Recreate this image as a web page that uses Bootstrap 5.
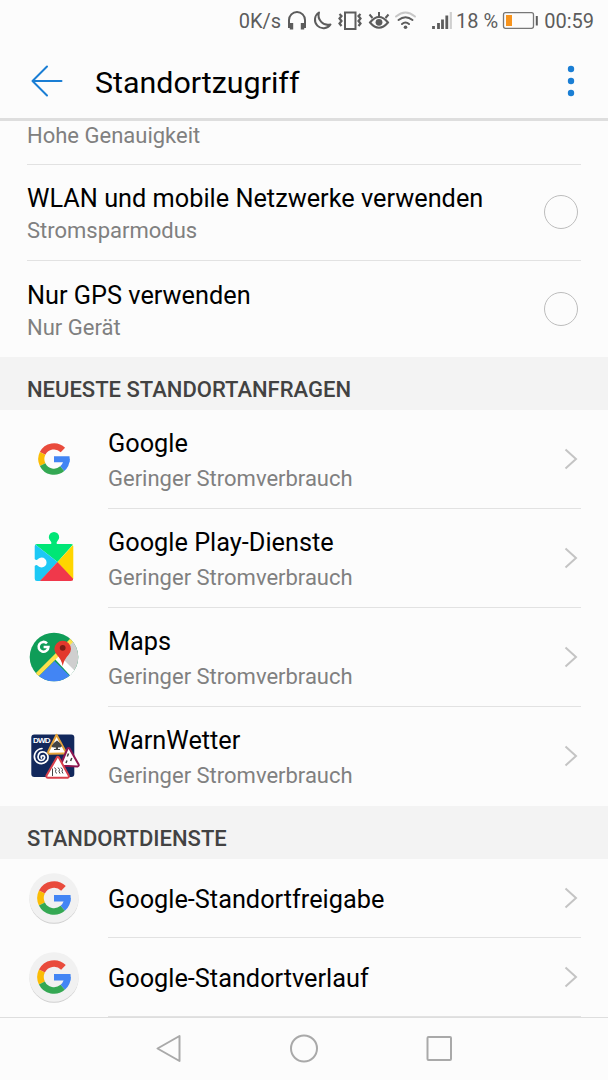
<!DOCTYPE html>
<html lang="de">
<head>
  <meta charset="UTF-8">
  <meta name="viewport" content="width=device-width, initial-scale=1.0">
  <title>Standortzugriff</title>

  <!-- Bootstrap CSS -->
  <link href="https://cdn.jsdelivr.net/npm/bootstrap@5.3.0/dist/css/bootstrap.min.css" rel="stylesheet">

  <style>
    body {
      background-color: #fcfcfc;
      color: #000;
      font-family: Roboto, "Liberation Sans", sans-serif;
      height: 1080px;
      overflow: hidden;
    }
    svg {
      display: block;
      flex-shrink: 0;
    }
    .status-bar {
      height: 42px;
      padding-right: 14px;
      font-size: 20px;
      color: #5c5c5c;
    }
    .app-bar {
      height: 79px;
      border-bottom: 3px solid #dedede;
      padding: 2px 31px 0 31px;
    }
    .app-title {
      font-size: 30.4px;
      line-height: 36px;
      margin-left: 31px;
      padding-top: 3px;
    }
    .mode-row {
      height: 96px;
      margin: 0 27px;
      padding-right: 3px;
      border-bottom: 1px solid #e2e2e2;
    }
    .mode-row.first-row {
      height: 44px;
    }
    .mode-row.first-row .row-note {
      line-height: 30px;
    }
    .mode-row.last-row {
      border-bottom: 0;
    }
    .mode-text {
      padding-top: 5px;
    }
    .row-title {
      font-size: 25.3px;
      line-height: 32px;
    }
    .row-note {
      font-size: 22px;
      line-height: 32px;
      color: #808080;
    }
    .form-check-input.mode-radio {
      width: 34px;
      height: 34px;
      margin: 0 0 1px;
      background-color: transparent;
      border: 1.5px solid #bdbdbd;
    }
    .section-head {
      height: 53px;
      padding: 11px 27px 0;
      background-color: #f3f3f3;
      color: #424242;
      font-size: 22px;
      font-weight: 500;
      line-height: 44px;
    }
    .app-row {
      height: 99px;
      padding-left: 27px;
      padding-right: 27px;
    }
    .app-row .row-note {
      margin-top: 3px;
    }
    .app-row.service-row {
      height: 79px;
    }
    .app-icon {
      width: 54px;
      margin-right: 27px;
      padding-bottom: 2px;
    }
    .app-text {
      border-bottom: 1px solid #e2e2e2;
      padding-right: 3px;
    }
    .app-label {
      padding-top: 5px;
    }
    .service-row .app-label {
      padding-top: 3px;
    }
    .app-row.no-line .app-text {
      border-bottom-color: transparent;
    }
    .nav-keys {
      height: 63px;
      border-top: 1px solid #dedede;
      background-color: #fcfcfc;
    }
  </style>
</head>
<body class="d-flex flex-column">

<!-- Shared symbols -->
<svg width="0" height="0" class="position-absolute">
  <symbol id="g-logo" viewBox="-16 -16 32 32">
    <g fill="none" stroke-width="6.2">
      <path stroke="#e94b3c" d="M-11.4-5.6A12.7 12.7 0 0 1 8.9-9"/>
      <path stroke="#fbbc05" d="M-11.4 5.6A12.7 12.7 0 0 1-11.4-5.6"/>
      <path stroke="#4285f4" d="M12.6 0A12.7 12.7 0 0 1 8.2 9.7"/>
      <path stroke="#34a853" d="M8.2 9.7A12.7 12.7 0 0 1-11.4 5.6"/>
    </g>
    <path fill="#4285f4" d="M0-2.8H15.5Q16 .2 15.5 3.3H0z"/>
  </symbol>
  <symbol id="chevron" viewBox="0 0 14 22">
    <path d="M1.500 1.500L12 11 1.500 20.500" fill="none" stroke="#c4c4c4" stroke-width="2"/>
  </symbol>
</svg>

<!-- Status bar -->
<div class="status-bar d-flex align-items-center justify-content-end flex-shrink-0">
  <span class="status-rate">0K/s</span>
  <svg width="156" height="28" viewBox="282 7 156 28" fill="none" stroke="#5c5c5c" stroke-width="2">
    <path d="M290 28V20a8 8 0 0 1 16 0v8"/>
    <path d="M292.500 23v6.500M303.500 23v6.500" stroke-width="3.400"/>
    <path d="M320 12.500A8.500 8.500 0 1 0 331.500 24.500A9.500 9.500 0 0 1 320 12.500z" stroke-linejoin="round"/>
    <path d="M346 12.500h10.500v16.500H346z"/>
    <path d="M340.500 14l2 2-2 2.500 2 2.500-2 2.500 2 2.500M361.500 14l-2 2 2 2.500-2 2.500 2 2.500-2 2.500" stroke-width="2.200"/>
    <path d="M371 22.500Q380 11.500 389 22.500Q380 33 371 22.500z"/>
    <circle cx="380" cy="22.300" r="3.400" fill="#5c5c5c" stroke="none"/>
    <path d="M380 17v-5M373.500 18l-3-3.500M386.500 18l3-3.500"/>
    <g stroke-linecap="round">
      <path d="M397 16.500Q406.500 8.500 416 16.500" stroke="#c8c8c8"/>
      <path d="M399.500 20Q406.500 14.500 413.500 20M403 24Q406.500 21 410 24"/>
    </g>
    <circle cx="406.500" cy="27.300" r="1.800" fill="#5c5c5c" stroke="none"/>
    <path d="M434.500 29v-3" stroke-width="2.800"/>
  </svg>
  <svg width="15" height="28" viewBox="438 7 15 28" fill="none" stroke="#5c5c5c" stroke-width="2.800">
    <path d="M439.500 29v-6M443.500 29V19.500M447.800 29V15.500"/>
    <path d="M451.800 29V12" stroke="#cfcfcf" stroke-width="2.200"/>
  </svg>
  <span class="ms-1">18 %</span>
  <svg class="ms-1" width="38" height="28" viewBox="502 7 38 28">
    <rect x="503.500" y="12.700" width="30" height="15.600" rx="2" fill="none" stroke="#777" stroke-width="1.300"/>
    <rect x="506" y="15" width="6" height="11" fill="#f7941e"/>
    <path d="M536.800 16v9.500" stroke="#5c5c5c" stroke-width="2"/>
  </svg>
  <span class="ms-1">00:59</span>
</div>

<!-- App bar -->
<header class="app-bar d-flex align-items-center flex-shrink-0">
  <svg width="33" height="32" viewBox="1 0 33 32" fill="none" stroke="#1a7ed4" stroke-width="2" stroke-linecap="round" stroke-linejoin="round">
    <path d="M17 1.500L2.500 16 17 30.500M2.500 16H31.500"/>
  </svg>
  <h1 class="app-title mb-0 fw-normal">Standortzugriff</h1>
  <svg class="ms-auto" width="12" height="32" viewBox="0 0 12 32" fill="#1a7ed4">
    <circle cx="6" cy="4" r="3.200"/>
    <circle cx="6" cy="16" r="3.200"/>
    <circle cx="6" cy="28" r="3.200"/>
  </svg>
</header>

<main class="flex-grow-1 overflow-hidden">
  <!-- Location mode -->
  <div class="mode-row first-row">
    <div class="row-note">Hohe Genauigkeit</div>
  </div>
  <div class="mode-row d-flex align-items-center justify-content-between">
    <div class="mode-text">
      <div class="row-title">WLAN und mobile Netzwerke verwenden</div>
      <div class="row-note">Stromsparmodus</div>
    </div>
    <input class="form-check-input mode-radio" type="radio" name="mode" aria-label="Stromsparmodus">
  </div>
  <div class="mode-row last-row d-flex align-items-center justify-content-between">
    <div class="mode-text">
      <div class="row-title">Nur GPS verwenden</div>
      <div class="row-note">Nur Gerät</div>
    </div>
    <input class="form-check-input mode-radio" type="radio" name="mode" aria-label="Nur Gerät">
  </div>

  <!-- Recent requests -->
  <div class="section-head">NEUESTE STANDORTANFRAGEN</div>
  <div class="app-row d-flex">
    <div class="app-icon d-flex align-items-center justify-content-center">
      <svg width="32" height="32"><use href="#g-logo"/></svg>
    </div>
    <div class="app-text flex-grow-1 d-flex align-items-center justify-content-between">
      <div class="app-label">
        <div class="row-title">Google</div>
        <div class="row-note">Geringer Stromverbrauch</div>
      </div>
      <svg width="14" height="22"><use href="#chevron"/></svg>
    </div>
  </div>
  <div class="app-row d-flex">
    <div class="app-icon d-flex align-items-center justify-content-center">
      <svg width="54" height="54" viewBox="27 531 54 54">
        <clipPath id="piece">
          <path d="M37 544H51Q52 543 50.500 541A5.200 5.200 0 1 1 57.500 541Q56 543 57 544H71Q73.300 544 73.300 546.300V578.500Q73.300 581 71 581H37Q34.700 581 34.700 578.500V566Q36.500 564 38 566A5 5 0 1 0 38 559Q36.500 561 34.700 559V546.300Q34.700 544 37 544z"/>
        </clipPath>
        <g clip-path="url(#piece)">
          <path fill="#00e676" d="M34 530H74V543.500L57.500 562 34 543.500z"/>
          <path fill="#1cc8f5" d="M34 543.500L57.500 562 39.500 582H34z"/>
          <path fill="#ffd500" d="M74 544V582L57.500 562z"/>
          <path fill="#f0384b" d="M57.500 562L76 582H39z"/>
        </g>
      </svg>
    </div>
    <div class="app-text flex-grow-1 d-flex align-items-center justify-content-between">
      <div class="app-label">
        <div class="row-title">Google Play-Dienste</div>
        <div class="row-note">Geringer Stromverbrauch</div>
      </div>
      <svg width="14" height="22"><use href="#chevron"/></svg>
    </div>
  </div>
  <div class="app-row d-flex">
    <div class="app-icon d-flex align-items-center justify-content-center">
      <svg width="54" height="54" viewBox="27 630 54 54">
        <clipPath id="disc"><circle cx="54" cy="657" r="24.300"/></clipPath>
        <g clip-path="url(#disc)">
          <path fill="#0f9d58" d="M27 630H81V684H27z"/>
          <path fill="#cfcfcf" d="M58 656L73 641H81V684H76z"/>
          <path fill="#fff" d="M54 658L59 655 81 677V684H78z"/>
          <path d="M32 680L72 640" stroke="#fde04b" stroke-width="4.500"/>
          <path fill="#4285f4" d="M54.500 661L38 677V684H78z"/>
        </g>
        <g fill="none" stroke="#fff" stroke-width="2.600">
          <path d="M47 643.400A4.900 4.900 0 1 0 48.400 647H43.600"/>
        </g>
        <path fill="#e2382d" d="M62.700 666Q61.500 659.500 57 655A8.300 8.300 0 1 1 68.400 655Q64 659.500 62.700 666z"/>
        <circle cx="62.700" cy="647.800" r="2.900" fill="#7d1d16"/>
      </svg>
    </div>
    <div class="app-text flex-grow-1 d-flex align-items-center justify-content-between">
      <div class="app-label">
        <div class="row-title">Maps</div>
        <div class="row-note">Geringer Stromverbrauch</div>
      </div>
      <svg width="14" height="22"><use href="#chevron"/></svg>
    </div>
  </div>
  <div class="app-row no-line d-flex">
    <div class="app-icon d-flex align-items-center justify-content-center">
      <svg width="54" height="54" viewBox="27 729 54 54">
        <rect x="31.300" y="734.500" width="43" height="42.500" rx="3" fill="#12285c"/>
        <text x="33" y="743.200" fill="#fff" font-family="Liberation Sans" font-size="8" font-weight="700" textLength="17.500">DWD</text>
        <path d="M41.500 758Q40.500 755.500 43.500 755.500Q46 757.500 43 760Q38.500 761.500 38 757Q38.500 751 44 752Q49.500 754 47.500 760Q43.500 765.500 37.500 762.500Q33 759 35 753.500Q37 749 42 748.500" fill="none" stroke="#fff" stroke-width="1.700" stroke-linecap="round"/>
        <g fill="#fff" stroke-width="2" stroke-linejoin="round">
          <path stroke="#e5a33a" d="M56.500 734.800L65.500 751.500Q66 753.500 64 753.500L49.500 753.800Q47.500 753.500 48.300 751.500z"/>
          <path stroke="#8e1650" d="M67.500 748.500L61.300 763.500Q61 765.500 63 765.800L77.500 766.500Q79.300 766 78.500 764.300L69.500 748.500Q68.500 747.300 67.500 748.500z"/>
          <path stroke="#d9404b" d="M57 757.300L46.500 775.500Q46 777.800 48 777.800H67.500Q69.300 777.300 68.700 775.500L58.700 757.300Q57.800 756 57 757.300z"/>
        </g>
        <path fill="#444" d="M57 740.500l3 2.500 2 3q-1 2-4 1.500v1.500h2v1h-6v-1h1.800v-1.500q-4 .5-4.300-1.500l2.300-3z"/>
        <g fill="none" stroke="#444" stroke-width="1.500">
          <path d="M68.500 753.500l-1.200 3M71.800 758l-1.200 3M67 760.500l-1 2.500"/>
          <path d="M52.500 776V768.500M54.500 767.500l1.500 2-.5 2 1 2M58 767.500l1.500 2-.5 2 1 2M61 767.500l1.500 2-.5 2 1 2" stroke-width="1"/>
        </g>
      </svg>
    </div>
    <div class="app-text flex-grow-1 d-flex align-items-center justify-content-between">
      <div class="app-label">
        <div class="row-title">WarnWetter</div>
        <div class="row-note">Geringer Stromverbrauch</div>
      </div>
      <svg width="14" height="22"><use href="#chevron"/></svg>
    </div>
  </div>

  <!-- Location services -->
  <div class="section-head">STANDORTDIENSTE</div>
  <div class="app-row service-row d-flex">
    <div class="app-icon d-flex align-items-center justify-content-center">
      <svg width="54" height="54" viewBox="0 0 54 54">
        <circle cx="27" cy="28.300" r="24.500" fill="#cfcfcf"/>
        <circle cx="27" cy="27" r="24.800" fill="#f1f1f1"/>
        <use href="#g-logo" x="10" y="10" width="34" height="34"/>
      </svg>
    </div>
    <div class="app-text flex-grow-1 d-flex align-items-center justify-content-between">
      <div class="app-label row-title">Google-Standortfreigabe</div>
      <svg width="14" height="22"><use href="#chevron"/></svg>
    </div>
  </div>
  <div class="app-row service-row d-flex">
    <div class="app-icon d-flex align-items-center justify-content-center">
      <svg width="54" height="54" viewBox="0 0 54 54">
        <circle cx="27" cy="28.300" r="24.500" fill="#cfcfcf"/>
        <circle cx="27" cy="27" r="24.800" fill="#f1f1f1"/>
        <use href="#g-logo" x="10" y="10" width="34" height="34"/>
      </svg>
    </div>
    <div class="app-text flex-grow-1 d-flex align-items-center justify-content-between">
      <div class="app-label row-title">Google-Standortverlauf</div>
      <svg width="14" height="22"><use href="#chevron"/></svg>
    </div>
  </div>
</main>

<!-- Navigation keys -->
<footer class="nav-keys flex-shrink-0">
  <svg width="608" height="62" viewBox="0 1018 608 62" fill="none" stroke="#a9a9a9" stroke-width="2" stroke-linejoin="round">
    <path d="M179.500 1036V1061L157.500 1048.500z"/>
    <circle cx="304" cy="1048.500" r="13"/>
    <rect x="427.500" y="1037" width="23.500" height="23" rx="1"/>
  </svg>
</footer>

<!-- Bootstrap JS -->
<script src="https://cdn.jsdelivr.net/npm/bootstrap@5.3.0/dist/js/bootstrap.bundle.min.js"></script>
</body>
</html>
